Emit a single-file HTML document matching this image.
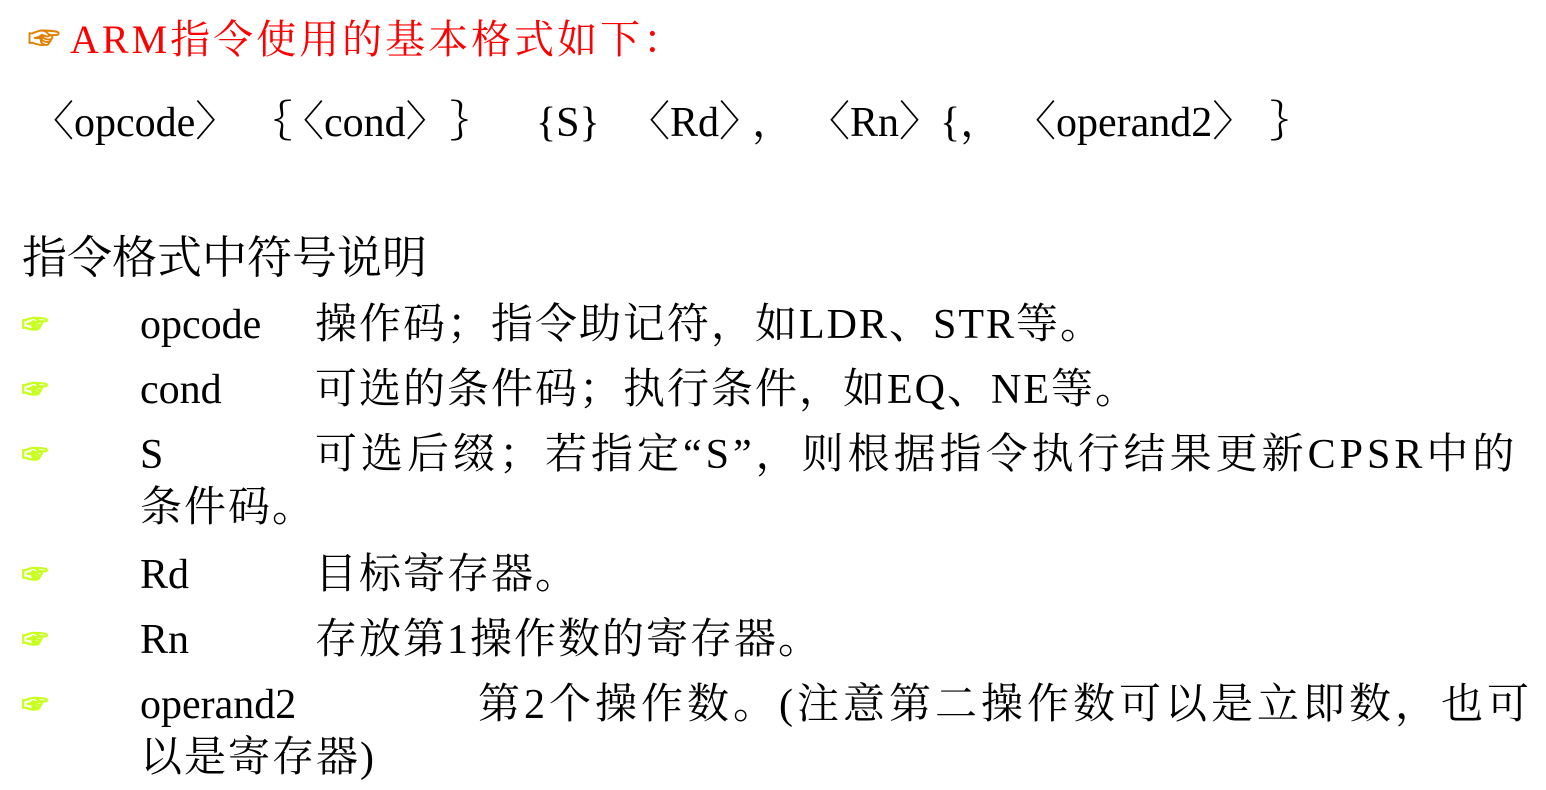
<!DOCTYPE html>
<html><head><meta charset="utf-8"><style>
html,body{margin:0;padding:0;background:#fff;width:1546px;height:790px;overflow:hidden}
body{position:relative;font-family:"Liberation Serif","Noto Serif CJK SC",serif;color:#000}
.a{position:absolute;white-space:nowrap;line-height:1}
.t{font-size:42px}
.d{letter-spacing:2px}
.h{color:#c8ff20;font-size:26px;-webkit-text-stroke:1.5px #c8ff20}
</style></head><body>
<div class="a" style="left:28px;top:22px;font-size:32px;color:#e08000;-webkit-text-stroke:1px #e08000">☞</div>
<div class="a" style="left:70px;top:20px;font-size:40px;color:#ff0000;letter-spacing:3px">ARM指令使用的基本格式如下：</div>

<div class="a t" style="left:32px;top:102px">〈opcode〉</div>
<div class="a t" style="left:250px;top:102px">｛</div>
<div class="a t" style="left:282px;top:102px">〈cond〉</div>
<div class="a t" style="left:450px;top:102px">｝</div>
<div class="a t" style="left:536px;top:102px">{S}</div>
<div class="a t" style="left:628px;top:102px">〈Rd〉</div>
<div class="a t" style="left:752px;top:102px">，</div>
<div class="a t" style="left:808px;top:102px">〈Rn〉</div>
<div class="a t" style="left:940px;top:102px">{，</div>
<div class="a t" style="left:1014px;top:102px">〈operand2〉</div>
<div class="a t" style="left:1270px;top:102px">｝</div>

<div class="a" style="left:22px;top:236px;font-size:45px">指令格式中符号说明</div>

<div class="a h" style="left:22px;top:312px">☞</div>
<div class="a t" style="left:140px;top:304px">opcode</div>
<div class="a t d" style="left:315px;top:304px">操作码；指令助记符，如LDR、STR等。</div>

<div class="a h" style="left:22px;top:377px">☞</div>
<div class="a t" style="left:140px;top:369px">cond</div>
<div class="a t d" style="left:315px;top:369px">可选的条件码；执行条件，如EQ、NE等。</div>

<div class="a h" style="left:22px;top:442px">☞</div>
<div class="a t" style="left:140px;top:434px">S</div>
<div class="a t" style="left:315px;top:434px;letter-spacing:4px">可选后缀；若指定“S”，则根据指令执行结果更新CPSR中的</div>
<div class="a t d" style="left:140px;top:487px">条件码。</div>

<div class="a h" style="left:22px;top:562px">☞</div>
<div class="a t" style="left:140px;top:554px">Rd</div>
<div class="a t d" style="left:315px;top:554px">目标寄存器。</div>

<div class="a h" style="left:22px;top:627px">☞</div>
<div class="a t" style="left:140px;top:619px">Rn</div>
<div class="a t d" style="left:315px;top:619px">存放第1操作数的寄存器。</div>

<div class="a h" style="left:22px;top:692px">☞</div>
<div class="a t" style="left:140px;top:684px">operand2</div>
<div class="a t" style="left:478px;top:684px;letter-spacing:4px">第2个操作数。(注意第二操作数可以是立即数，也可</div>
<div class="a t d" style="left:140px;top:737px">以是寄存器)</div>
</body></html>
